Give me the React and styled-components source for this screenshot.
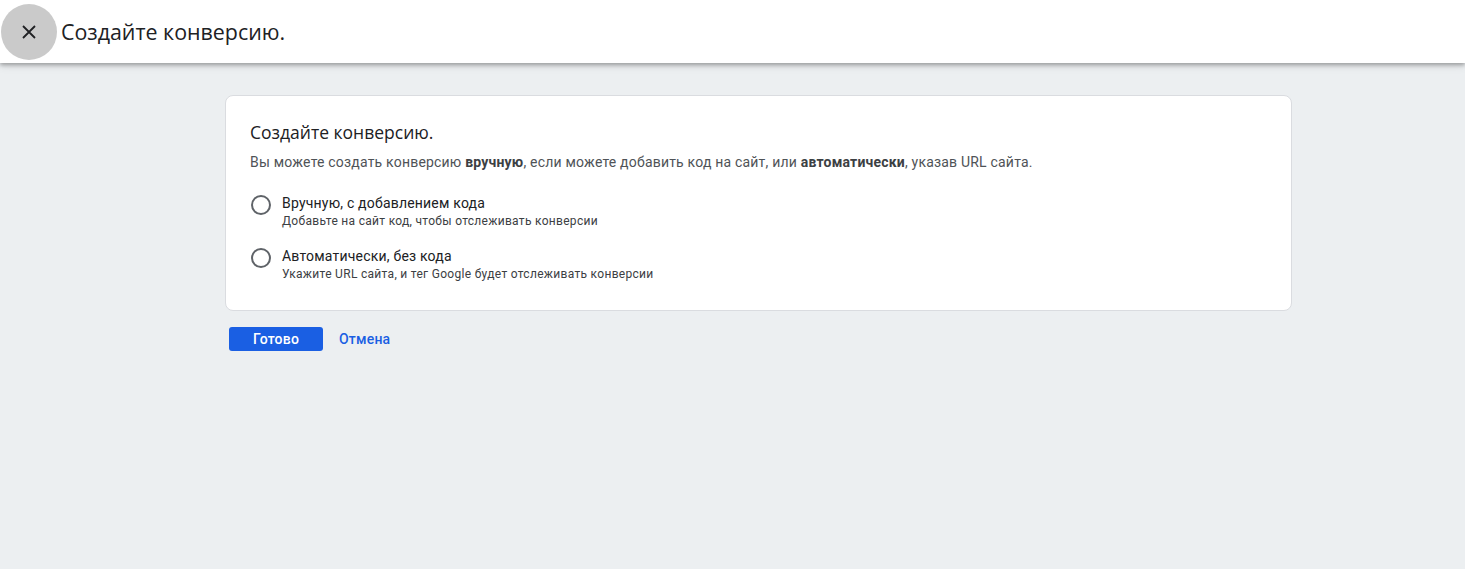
import React, { useState } from 'react'
import styled, { createGlobalStyle } from 'styled-components'

const GlobalStyle = createGlobalStyle`
    html, body {
        margin: 0;
        padding: 0;
        background: #eceff1;
        font-family: Roboto, "Liberation Sans", Arial, sans-serif;
    }
    * { box-sizing: border-box; }
`;

const options = [
    { id: 'manual', label: 'Вручную, с добавлением кода', hint: 'Добавьте на сайт код, чтобы отслеживать конверсии' },
    { id: 'auto', label: 'Автоматически, без кода', hint: 'Укажите URL сайта, и тег Google будет отслеживать конверсии' },
];

function App() {
    const [choice, setChoice] = useState(null)

    return (
        <Page>
            <GlobalStyle />
            <Header>
                <CloseButton type="button" aria-label="Закрыть">
                    <svg width="14" height="14" viewBox="0 0 14 14">
                        <path d="M1 1 L13 13 M13 1 L1 13" stroke="#202124" strokeWidth="1.8" />
                    </svg>
                </CloseButton>
                <HeaderTitle>Создайте конверсию.</HeaderTitle>
            </Header>
            <Content>
                <Card>
                    <CardTitle>Создайте конверсию.</CardTitle>
                    <Description>
                        Вы можете создать конверсию <b>вручную</b>, если можете добавить код на сайт, или <b>автоматически</b>, указав URL сайта.
                    </Description>
                    <OptionList>
                        {options.map(o => (
                            <Option key={o.id} onClick={() => setChoice(o.id)}>
                                <Radio $checked={choice === o.id} />
                                <OptionText>
                                    <OptionLabel>{o.label}</OptionLabel>
                                    <OptionHint>{o.hint}</OptionHint>
                                </OptionText>
                            </Option>
                        ))}
                    </OptionList>
                </Card>
                <Actions>
                    <PrimaryButton type="button">Готово</PrimaryButton>
                    <LinkButton type="button">Отмена</LinkButton>
                </Actions>
            </Content>
        </Page>
    )
}

const Page = styled.div`
    min-height: 569px;
    background: #eceff1;
`;

const Header = styled.header`
    height: 63px;
    background: #fff;
    display: flex;
    align-items: center;
    padding-left: 1px;
    gap: 4px;
    box-shadow: 0 2px 4px rgba(0, 0, 0, 0.3), 0 4px 8px rgba(0, 0, 0, 0.08);
    position: relative;
    z-index: 1;
`;

const CloseButton = styled.button`
    width: 56px;
    height: 56px;
    border-radius: 50%;
    border: none;
    background: #cacaca;
    display: flex;
    align-items: center;
    justify-content: center;
    padding: 0;
    cursor: pointer;
`;

const HeaderTitle = styled.h1`
    margin: 0;
    font-family: "Open Sans", Roboto, sans-serif;
    font-size: 21.4px;
    font-weight: 400;
    color: #202124;
`;

const Content = styled.main`
    width: 1067px;
    margin: 32px 0 0 225px;
`;

const Card = styled.section`
    background: #fff;
    border: 1px solid #dadce0;
    border-radius: 8px;
    padding: 24px 24px 28px;
`;

const CardTitle = styled.h2`
    margin: 0;
    font-family: "Open Sans", Roboto, sans-serif;
    font-size: 17.5px;
    font-weight: 400;
    color: #202124;
    line-height: 24px;
`;

const Description = styled.p`
    margin: 8px 0 0;
    font-size: 14px;
    line-height: 20px;
    letter-spacing: 0.2px;
    color: #4f5357;
    b { color: #3c4043; font-weight: 700; }
`;

const OptionList = styled.div`
    margin-top: 21px;
    display: flex;
    flex-direction: column;
    gap: 17px;
`;

const Option = styled.label`
    display: flex;
    align-items: flex-start;
    gap: 11px;
    cursor: pointer;
`;

const Radio = styled.span`
    width: 20px;
    height: 20px;
    border-radius: 50%;
    border: 2px solid #5f6368;
    margin: 2px 0 0 1px;
    flex-shrink: 0;
    background: ${p => p.$checked ? 'radial-gradient(#1a73e8 4px, #fff 5px)' : '#fff'};
    border-color: ${p => p.$checked ? '#1a73e8' : '#5f6368'};
`;

const OptionText = styled.div`
    display: flex;
    flex-direction: column;
`;

const OptionLabel = styled.span`
    font-size: 14px;
    line-height: 20px;
    letter-spacing: 0.2px;
    color: #202124;
`;

const OptionHint = styled.span`
    font-size: 12px;
    line-height: 16px;
    letter-spacing: 0.3px;
    color: #3c4043;
`;

const Actions = styled.div`
    margin: 16px 0 0 4px;
    display: flex;
    align-items: center;
    gap: 16px;
`;

const PrimaryButton = styled.button`
    width: 94px;
    height: 24px;
    border: none;
    border-radius: 3px;
    background: #1a5fe3;
    color: #fff;
    font-family: Roboto, sans-serif;
    font-size: 14px;
    font-weight: 500;
    letter-spacing: 0.2px;
    cursor: pointer;
`;

const LinkButton = styled.button`
    border: none;
    background: none;
    padding: 0;
    color: #1a5fe3;
    font-family: Roboto, sans-serif;
    font-size: 14px;
    font-weight: 500;
    letter-spacing: 0.2px;
    cursor: pointer;
`;

export default App
